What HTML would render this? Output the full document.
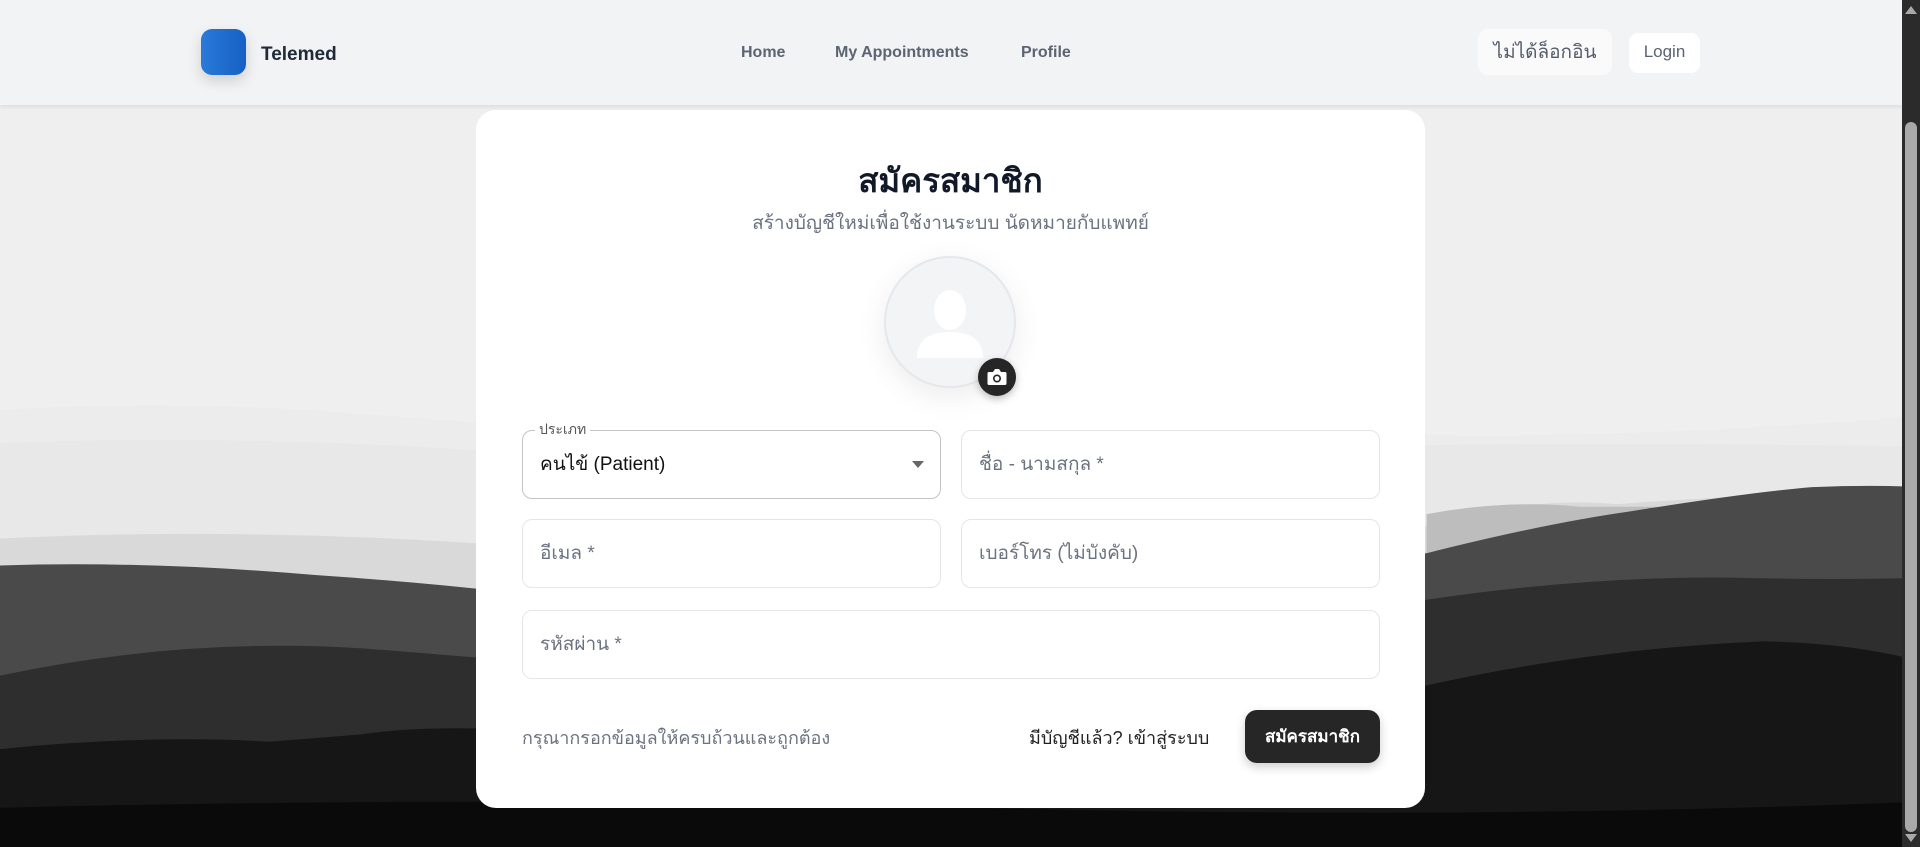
<!DOCTYPE html>
<html><head><meta charset="utf-8">
<style>
*{box-sizing:border-box;margin:0;padding:0}
html,body{width:1920px;height:847px;overflow:hidden;font-family:"Liberation Sans","DejaVu Sans",sans-serif;background:#f0f0f0}
.bg{position:absolute;left:0;top:0;width:1920px;height:847px}
.hdr{position:absolute;left:0;top:0;width:1902px;height:105px;background:#f2f3f5;box-shadow:0 2px 4px rgba(0,0,0,.08)}
.logo{position:absolute;left:201px;top:29px;width:45px;height:46px;border-radius:11px;background:linear-gradient(90deg,#2a7ad8,#1560c4);box-shadow:0 6px 14px rgba(0,0,0,.15)}
.brand{position:absolute;left:261px;top:44px;font-size:19px;font-weight:bold;color:#1f2937}
.nav{position:absolute;top:44px;font-size:16px;font-weight:bold;color:#5b6472}
.btn1{position:absolute;left:1478px;top:29px;width:134px;height:46px;background:#fafafa;border-radius:10px;font-size:19px;color:#555d6b;text-align:center;line-height:48px}
.btn2{position:absolute;left:1629px;top:33px;width:71px;height:40px;background:#fff;border-radius:9px;font-size:17px;color:#5b6472;text-align:center;line-height:38px}
.sb{position:absolute;left:1902px;top:0;width:18px;height:847px;background:#2b2b2b}
.thumb{position:absolute;left:1905px;top:122px;width:12px;height:710px;background:#a9a9a9;border-radius:6px}
.card{position:absolute;left:476px;top:110px;width:949px;height:698px;background:#fff;border-radius:20px}
.title{position:absolute;left:0;width:949px;top:44px;text-align:center;font-size:33px;font-weight:bold;color:#111827}
.sub{position:absolute;left:0;width:949px;top:98px;text-align:center;font-size:19px;color:#6b7280}
.av{position:absolute;left:408px;top:146px;width:132px;height:132px;border-radius:50%;background:#f3f4f6;border:2px solid #e5e7eb;box-shadow:0 8px 30px rgba(0,0,0,.08);overflow:hidden}
.cam{position:absolute;left:502px;top:248px;width:38px;height:38px;border-radius:50%;background:#262626;box-shadow:0 3px 8px rgba(0,0,0,.25)}
.f{position:absolute;height:69px;border:1px solid #e3e5e8;border-radius:10px;font-size:19px;color:#6b7280;padding-left:17px;line-height:67px}
.sel{border-color:#c4c4c4;color:#111}
.lg{position:absolute;left:12px;top:-11px;background:#fff;padding:0 4px;font-size:14px;color:#555;line-height:18px}
.bot{position:absolute;top:613px;font-size:18px}
.go{position:absolute;left:769px;top:600px;width:135px;height:53px;background:#262626;border-radius:12px;color:#fff;font-weight:bold;font-size:17px;text-align:center;line-height:53px;box-shadow:0 4px 10px rgba(0,0,0,.2)}
</style></head><body>
<svg class="bg" viewBox="0 0 1568 692" preserveAspectRatio="none">
<rect width="1568" height="692" fill="#efefef"/>
<path d="M0 335 Q150 325 320 340 T650 338 T1000 345 T1568 340 V692 H0Z" fill="#ececec"/>
<path d="M0 362 Q200 354 420 370 T900 372 T1568 365 V692 H0Z" fill="#e8e8e8"/>
<path d="M0 440 Q200 430 420 446 L1165 430 Q1250 405 1320 412 Q1450 402 1568 402 V692 H0Z" fill="#d9d9d9"/>
<path d="M1165 420 Q1230 408 1290 414 L1568 414 V692 H1165Z" fill="#bdbdbd"/>
<path d="M0 462 Q120 458 260 470 Q380 478 480 492 L1165 452 Q1260 428 1330 418 Q1430 402 1480 398 Q1530 396 1568 398 V692 H0Z" fill="#4a4a4a"/>
<path d="M0 552 Q150 520 300 530 Q400 538 480 545 L1165 490 Q1300 470 1420 472 Q1500 474 1568 472 V692 H0Z" fill="#2e2e2e"/>
<path d="M0 612 Q120 600 220 606 L295 600 Q360 590 480 600 L1165 560 Q1300 530 1440 524 Q1510 525 1568 540 V692 H0Z" fill="#161616"/>
<path d="M0 660 Q400 650 800 660 T1568 655 V692 H0Z" fill="#0a0a0a"/>
</svg>
<div class="hdr">
<div class="logo"></div><div class="brand">Telemed</div>
<div class="nav" style="left:741px">Home</div>
<div class="nav" style="left:835px">My Appointments</div>
<div class="nav" style="left:1021px">Profile</div>
<div class="btn1">ไม่ได้ล็อกอิน</div>
<div class="btn2">Login</div>
</div>
<div class="card">
<div class="title">สมัครสมาชิก</div>
<div class="sub">สร้างบัญชีใหม่เพื่อใช้งานระบบ นัดหมายกับแพทย์</div>
<div class="av"><svg width="128" height="128" viewBox="0 0 128 128"><ellipse cx="64" cy="52" rx="16" ry="20" fill="#fff"/><path d="M31 100 Q31 74 64 74 Q97 74 97 100Z" fill="#fff"/></svg></div>
<div class="cam"><svg width="38" height="38" viewBox="0 0 38 38"><path d="M11 14 h4 l2-3 h4 l2 3 h4 a1.5 1.5 0 0 1 1.5 1.5 v10 a1.5 1.5 0 0 1-1.5 1.5 h-16 a1.5 1.5 0 0 1-1.5-1.5 v-10 a1.5 1.5 0 0 1 1.5-1.5z" fill="#fff"/><circle cx="19" cy="20.5" r="4" fill="#262626"/><circle cx="19" cy="20.5" r="2.4" fill="#fff"/></svg></div>
<div class="f sel" style="left:46px;top:320px;width:419px">คนไข้ (Patient)<span class="lg">ประเภท</span><svg style="position:absolute;right:16px;top:30px" width="12" height="7"><path d="M0 0H12L6 7Z" fill="#666"/></svg></div>
<div class="f" style="left:485px;top:320px;width:419px">ชื่อ - นามสกุล *</div>
<div class="f" style="left:46px;top:409px;width:419px">อีเมล *</div>
<div class="f" style="left:485px;top:409px;width:419px">เบอร์โทร (ไม่บังคับ)</div>
<div class="f" style="left:46px;top:500px;width:858px">รหัสผ่าน *</div>
<div class="bot" style="left:46px;color:#6b7280">กรุณากรอกข้อมูลให้ครบถ้วนและถูกต้อง</div>
<div class="bot" style="left:553px;color:#222">มีบัญชีแล้ว? เข้าสู่ระบบ</div>
<div class="go">สมัครสมาชิก</div>
</div>
<div class="sb"></div><div class="thumb"></div>
<svg style="position:absolute;left:1905px;top:6px" width="12" height="8"><path d="M0 8L6 0L12 8Z" fill="#a9a9a9"/></svg>
<svg style="position:absolute;left:1905px;top:834px" width="12" height="8"><path d="M0 0L6 8L12 0Z" fill="#a9a9a9"/></svg>
</body></html>
